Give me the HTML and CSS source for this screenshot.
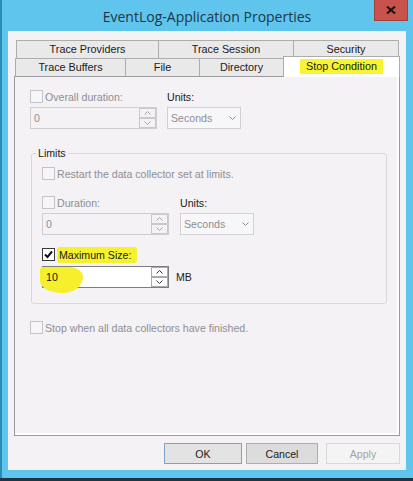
FILE: index.html
```html
<!DOCTYPE html>
<html lang="en">
<head>
    <meta charset="UTF-8">
    <meta name="viewport" content="width=device-width, initial-scale=1.0">
    <title>EventLog-Application Properties</title>
    <link rel="stylesheet" href="styles.css">
</head>
<body>

<div class="window">
    <div class="titlebar">
        <div class="title">EventLog-Application Properties</div>
        <div class="close-btn">
            <svg width="10" height="8" viewBox="0 0 10 8"><path d="M1 0.5 L9 7.5 M9 0.5 L1 7.5"/></svg>
        </div>
    </div>

    <div class="client">
        <div class="tab-row back">
            <div class="tab t-providers">Trace Providers</div>
            <div class="tab t-session">Trace Session</div>
            <div class="tab t-security">Security</div>
        </div>
        <div class="tab-row front">
            <div class="tab t-buffers">Trace Buffers</div>
            <div class="tab t-file">File</div>
            <div class="tab t-directory">Directory</div>
            <div class="tab t-stop selected"><span class="marker">Stop Condition</span></div>
        </div>

        <div class="page">
            <div class="field-grid">
                <label class="check disabled"><span class="box"></span>Overall duration:</label>
                <div class="caption">Units:</div>
                <div class="spin">
                    <span class="spin-value">0</span>
                    <span class="spin-buttons">
                        <span class="spin-btn"><svg width="7" height="4" viewBox="0 0 7 4"><polyline points="0.5,3.5 3.5,0.5 6.5,3.5"/></svg></span>
                        <span class="spin-btn"><svg width="7" height="4" viewBox="0 0 7 4"><polyline points="0.5,0.5 3.5,3.5 6.5,0.5"/></svg></span>
                    </span>
                </div>
                <div class="combo">
                    <span>Seconds</span>
                    <svg width="7" height="4" viewBox="0 0 7 4"><polyline points="0.5,0.5 3.5,3.5 6.5,0.5"/></svg>
                </div>
            </div>

            <fieldset class="limits">
                <legend>Limits</legend>
                <label class="check disabled"><span class="box"></span>Restart the data collector set at limits.</label>

                <div class="field-grid duration">
                    <label class="check disabled"><span class="box"></span>Duration:</label>
                    <div class="caption">Units:</div>
                    <div class="spin">
                        <span class="spin-value">0</span>
                        <span class="spin-buttons">
                            <span class="spin-btn"><svg width="7" height="4" viewBox="0 0 7 4"><polyline points="0.5,3.5 3.5,0.5 6.5,3.5"/></svg></span>
                            <span class="spin-btn"><svg width="7" height="4" viewBox="0 0 7 4"><polyline points="0.5,0.5 3.5,3.5 6.5,0.5"/></svg></span>
                        </span>
                    </div>
                    <div class="combo">
                        <span>Seconds</span>
                        <svg width="7" height="4" viewBox="0 0 7 4"><polyline points="0.5,0.5 3.5,3.5 6.5,0.5"/></svg>
                    </div>
                </div>

                <label class="check max-size">
                    <span class="box checked"><svg width="9" height="9" viewBox="0 0 9 9"><path d="M1 4.5 L3.5 7 L8 1.5"/></svg></span>
                    <span class="marker">Maximum Size:</span>
                </label>
                <div class="size-row">
                    <div class="spin active">
                        <span class="blob"></span>
                        <span class="spin-value">10</span>
                        <span class="spin-buttons">
                            <span class="spin-btn"><svg width="7" height="4" viewBox="0 0 7 4"><polyline points="0.5,3.5 3.5,0.5 6.5,3.5"/></svg></span>
                            <span class="spin-btn"><svg width="7" height="4" viewBox="0 0 7 4"><polyline points="0.5,0.5 3.5,3.5 6.5,0.5"/></svg></span>
                        </span>
                    </div>
                    <span class="caption">MB</span>
                </div>
            </fieldset>

            <label class="check disabled stop-all"><span class="box"></span>Stop when all data collectors have finished.</label>
        </div>

        <div class="buttons">
            <button class="btn default">OK</button>
            <button class="btn cancel">Cancel</button>
            <button class="btn apply" disabled>Apply</button>
        </div>
    </div>
</div>

</body>
</html>
```

FILE: styles.css
```css
* {
    margin: 0;
    padding: 0;
    box-sizing: border-box;
}

html, body {
    width: 413px;
    height: 481px;
    overflow: hidden;
}

body {
    background: #1d3444;
    font-family: "Liberation Sans", Arial, sans-serif;
    font-size: 10.6px;
    color: #1a1a1a;
}

/* window frame */
.window {
    height: 478px;
    background: #60c5ec;
    border-left: 2px solid #2c8db3;
    padding: 0 7px 8px 6px;
    display: flex;
    flex-direction: column;
}

.titlebar {
    height: 31px;
    flex: none;
    display: grid;
}

.title, .close-btn {
    grid-area: 1 / 1;
}

.title {
    justify-self: center;
    align-self: center;
    padding-top: 1px;
    font-family: "Open Sans", "Liberation Sans", sans-serif;
    font-size: 14px;
    color: #1c3648;
}

.close-btn {
    justify-self: end;
    align-self: start;
    width: 34px;
    height: 21px;
    margin-right: -2px;
    background: #c8524c;
    border: 1px solid #a2403b;
    border-top: 0;
    display: flex;
    align-items: center;
    justify-content: center;
}

.close-btn path {
    fill: none;
    stroke: #1b1010;
    stroke-width: 2;
}

.client {
    flex: 1;
    background: #f4f2f5;
    padding: 9px 6px 6px 6px;
    display: flex;
    flex-direction: column;
}

/* tabs */
.tab-row {
    display: flex;
    flex: none;
}

.tab-row.back { margin-left: 2px; }

.tab-row.front {
    margin-left: 1px;
    margin-top: -3px;
    align-items: flex-end;
}

.tab {
    border: 1px solid #acacac;
    background: #e9e9ea;
    text-align: center;
    font-size: 10.8px;
    line-height: 17px;
    margin-left: -1px;
    white-space: nowrap;
}

.tab:first-child { margin-left: 0; }

.back .tab { height: 19px; }

.front .tab {
    height: 18px;
    border-bottom: 0;
}

.t-providers { width: 143px; }
.t-session { width: 136px; }
.t-security { width: 106px; }
.t-buffers { width: 111px; }
.t-file { width: 75px; }
.t-directory { width: 85px; }
.t-stop { width: 117px; }

.tab.selected {
    height: 21px;
    margin-bottom: -1px;
    padding-top: 1px;
    background: #fff;
    position: relative;
    z-index: 1;
}

.tab .marker {
    display: inline-block;
    height: 15px;
    line-height: 15px;
    padding: 0 6px;
    background: #f8f431;
}

/* tab page */
.page {
    flex: 1;
    min-height: 0;
    border: 1px solid #9c9aa1;
    box-shadow: inset -2px -2px 0 #fff;
    padding: 13px 12px 0 15px;
}

.field-grid {
    display: grid;
    grid-template-columns: 127px 74px;
    grid-template-rows: 13px 22px;
    column-gap: 10px;
    row-gap: 4px;
}

.check {
    display: flex;
    align-items: center;
    gap: 2px;
    height: 13px;
    white-space: nowrap;
}

.check.disabled { color: #8f8e93; }

.box {
    flex: none;
    width: 13px;
    height: 13px;
    border: 1px solid #c5c3c8;
    background: #f6f5f7;
}

.box.checked {
    border-color: #3a3a3a;
    background: #fff;
    display: flex;
    align-items: center;
    justify-content: center;
}

.box.checked path {
    fill: none;
    stroke: #111;
    stroke-width: 2;
}

.caption {
    line-height: 13px;
    padding-top: 1px;
}

.spin {
    display: flex;
    height: 22px;
    border: 1px solid #cfcdd2;
    background: #f4f2f5;
}

.spin-value {
    flex: 1;
    padding-left: 3px;
    line-height: 20px;
    color: #8f8e93;
    position: relative;
    z-index: 1;
}

.spin-buttons {
    display: flex;
    flex-direction: column;
    width: 17px;
}

.spin-btn {
    height: 10px;
    border: 1px solid #cac8cd;
    display: flex;
    align-items: center;
    justify-content: center;
    color: #a5a5a8;
}

.spin polyline, .combo polyline {
    fill: none;
    stroke: currentColor;
    stroke-width: 1;
}

.spin.active {
    position: relative;
    border-color: #7d7d80;
    background: #fff;
}

.spin.active .spin-value { color: #111; }

.spin.active .spin-btn {
    border-color: #a9a9ac;
    color: #333;
}

/* marker scribble over the value */
.blob {
    position: absolute;
    left: -3px;
    top: 0;
    width: 43px;
    height: 26px;
    background: #f6f02c;
    border-radius: 3px 14px 20px 22px / 3px 10px 16px 12px;
}

.combo {
    display: flex;
    align-items: center;
    justify-content: space-between;
    height: 22px;
    border: 1px solid #d2d0d5;
    background: #f7f6f8;
    padding: 0 4px 0 3px;
    color: #8f8e93;
}

/* group box */
.limits {
    margin: 18px 0 0 1px;
    border: 1px solid #d9d7dc;
    border-radius: 3px;
    padding: 7px 10px 15px;
}

.limits legend {
    margin-left: -6px;
    padding: 0 2px;
    line-height: 13px;
}

.limits .field-grid {
    margin-top: 16px;
    column-gap: 11px;
}

.max-size { margin-top: 13px; }

.check .marker {
    height: 16px;
    line-height: 16px;
    padding: 0 6px 0 2px;
    background: #f6f12e;
    border-radius: 3px;
}

.size-row {
    display: flex;
    align-items: center;
    gap: 7px;
    margin-top: 5px;
}

.size-row .spin { width: 127px; }

.stop-all { margin-top: 17px; }

/* dialog buttons */
.buttons {
    display: flex;
    justify-content: flex-end;
    flex: none;
    height: 21px;
    margin-top: 7px;
}

.btn {
    font: inherit;
    height: 21px;
    border: 1px solid #adadad;
    background: #dcdcdc;
    color: #1a1a1a;
}

.btn.default {
    width: 78px;
    margin-right: 4px;
    border-color: #7aa3cc;
    background: #e3e3e3;
}

.btn.cancel {
    width: 72px;
    margin-right: 8px;
}

.btn.apply {
    width: 74px;
    background: #f4f4f4;
    border-color: #d8d8d8;
    color: #a3a3a3;
}
```
